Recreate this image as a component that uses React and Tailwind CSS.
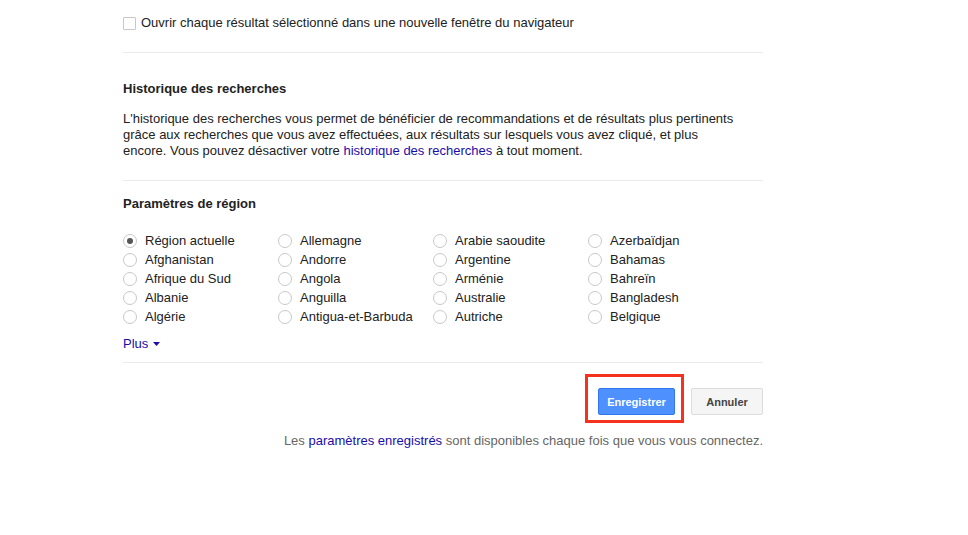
import React from 'react';

const countries = [
  ['Région actuelle', 'Afghanistan', 'Afrique du Sud', 'Albanie', 'Algérie'],
  ['Allemagne', 'Andorre', 'Angola', 'Anguilla', 'Antigua-et-Barbuda'],
  ['Arabie saoudite', 'Argentine', 'Arménie', 'Australie', 'Autriche'],
  ['Azerbaïdjan', 'Bahamas', 'Bahreïn', 'Bangladesh', 'Belgique'],
];

function Radio({ label, checked }) {
  return (
    <label className="flex items-center h-[19px] cursor-pointer">
      <span className="w-[14px] h-[14px] rounded-full border border-[#c8c8c8] bg-white flex items-center justify-center mr-[8px] shrink-0">
        {checked && <span className="w-[6px] h-[6px] rounded-full bg-[#555]" />}
      </span>
      <span>{label}</span>
    </label>
  );
}

export default function App() {
  return (
    <div className="w-[968px] h-[535px] bg-white text-[13px] leading-[16px] text-[#222]" style={{ fontFamily: '"Liberation Sans", Arial, sans-serif' }}>
      <div className="ml-[123px] w-[640px] pt-[15px]">
        {/* New window option */}
        <label className="flex items-center h-[16px]">
          <span className="w-[13px] h-[13px] border border-[#c8c8c8] rounded-[1px] bg-white mr-[5px] shrink-0" />
          <span>Ouvrir chaque résultat sélectionné dans une nouvelle fenêtre du navigateur</span>
        </label>

        <div className="mt-[21px] h-px bg-[#ebebeb]" />

        {/* Search history */}
        <h2 className="mt-[28px] font-bold">Historique des recherches</h2>
        <div className="mt-[14px]">
          <p>L'historique des recherches vous permet de bénéficier de recommandations et de résultats plus pertinents</p>
          <p>grâce aux recherches que vous avez effectuées, aux résultats sur lesquels vous avez cliqué, et plus</p>
          <p>
            <span>encore. Vous pouvez désactiver votre </span>
            <a href="#" className="text-[#1a0dab]">historique des recherches</a>
            <span> à tout moment.</span>
          </p>
        </div>

        <div className="mt-[21px] h-px bg-[#ebebeb]" />

        {/* Region settings */}
        <h2 className="mt-[15px] font-bold">Paramètres de région</h2>
        <div className="mt-[19px] grid grid-cols-[155px_155px_155px_155px]">
          {countries.map((col, i) => (
            <div key={i} className="flex flex-col">
              {col.map((c) => (
                <Radio key={c} label={c} checked={c === 'Région actuelle'} />
              ))}
            </div>
          ))}
        </div>

        <a href="#" className="mt-[10px] flex items-center gap-[5px] text-[#1a0dab] w-fit">
          Plus
          <svg width="7" height="4" viewBox="0 0 7 4"><path d="M0 0h7L3.5 4z" fill="#1a0dab" /></svg>
        </a>

        <div className="mt-[10px] h-px bg-[#ebebeb]" />

        {/* Actions */}
        <div className="mt-[25px] flex justify-end gap-[16px]">
          <div className="relative">
            <button className="h-[27px] w-[77px] rounded-[2px] border border-[#3079ed] bg-[#4d90fe] text-white text-[11px] font-bold">
              Enregistrer
            </button>
            <span className="absolute left-[-13px] top-[-14px] right-[-9px] bottom-[-8px] border-[3px] border-[#f5321e] pointer-events-none" />
          </div>
          <button className="h-[27px] w-[72px] rounded-[2px] border border-[#dcdcdc] bg-[#f5f5f5] text-[#444] text-[11px] font-bold">
            Annuler
          </button>
        </div>

        <p className="mt-[18px] text-right text-[#666]">
          Les <a href="#" className="text-[#1a0dab]">paramètres enregistrés</a> sont disponibles chaque fois que vous vous connectez.
        </p>
      </div>
    </div>
  );
}
